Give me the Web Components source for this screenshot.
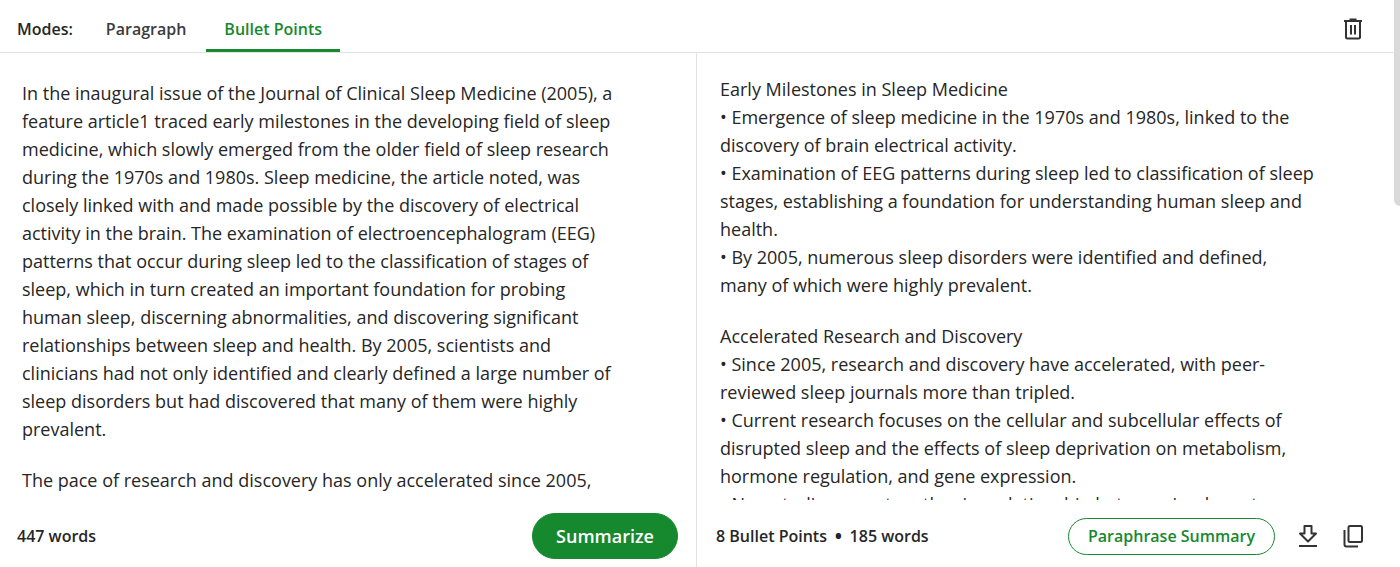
<!DOCTYPE html>
<html lang="en">
<head>
<meta charset="utf-8">
<title>Summarizer</title>
<style>
html,body{height:100%;margin:0}
body{font-family:"Open Sans",sans-serif;color:#262626;background:#fff;overflow:hidden}
</style>
</head>
<body>
<summarizer-app></summarizer-app>
<script>
const define = (name, html) => {
  const t = document.createElement('template');
  t.innerHTML = html;
  customElements.define(name, class extends HTMLElement {
    constructor() {
      super();
      this.attachShadow({ mode: 'open' }).append(t.content.cloneNode(true));
    }
    connectedCallback() {
      const label = this.getAttribute('label');
      const button = this.shadowRoot.querySelector('button');
      if (label && button) button.setAttribute('aria-label', label);
    }
  });
};

define('mode-bar', `
<style>
:host{display:flex;align-items:stretch;height:53px;flex:none;border-bottom:1px solid #e3e3e3;padding:0 35px 0 17px;box-sizing:border-box;font-size:16px;font-weight:600}
.label{align-self:center;margin:6px 15px 0 0}
nav{display:flex;flex:1;gap:2px}
.action{display:flex;padding-top:6px}
</style>
<span class="label">Modes:</span><nav><slot></slot></nav><div class="action"><slot name="action"></slot></div>`);

define('mode-tab', `
<style>
:host{display:flex}
button{font:inherit;color:#3c3c3c;background:none;border:0;border-bottom:3px solid transparent;padding:9px 18px 0;cursor:pointer}
:host([selected]) button{color:#16892f;border-color:#16892f}
</style>
<button type="button"><slot></slot></button>`);

define('icon-button', `
<style>
:host{display:flex;align-items:center}
button{display:flex;border:0;background:none;padding:0;color:#333;cursor:pointer}
</style>
<button type="button"><slot></slot></button>`);

define('pill-button', `
<style>
:host{display:flex}
button{font:inherit;font-weight:600;font-size:16px;height:37px;padding:0 19px;border-radius:24px;border:1px solid #16892f;background:#fff;color:#16892f;cursor:pointer}
:host([primary]) button{font-size:18px;height:46px;padding:0 23px;background:#16892f;color:#fff}
</style>
<button type="button"><slot></slot></button>`);

define('text-pane', `
<style>
:host{display:flex;flex-direction:column;min-width:0;min-height:0}
.body{flex:1;min-height:0;overflow:hidden;font-size:18px;line-height:28px;padding:var(--body-pad)}
footer{flex:none;height:67px;box-sizing:border-box;display:flex;align-items:center;padding:var(--foot-pad);font-size:16px;font-weight:600}
.count{flex:1}
.tools{display:flex;align-items:center;gap:21px}
</style>
<div class="body"><slot></slot></div>
<footer><span class="count"><slot name="count"></slot></span><div class="tools"><slot name="tools"></slot></div></footer>`);

define('summarizer-app', `
<style>
:host{display:flex;flex-direction:column;height:100%;position:relative}
main{flex:1;min-height:0;display:grid;grid-template-columns:697fr 703fr;grid-template-rows:minmax(0,1fr)}
text-pane:first-child{border-right:1px solid #e3e3e3;--body-pad:26px 22px 0;--foot-pad:5px 18px 0 17px}
text-pane:last-child{--body-pad:22px 23px 0;--foot-pad:5px 35px 0 19px}
p{margin:0 0 23px;white-space:pre-line;max-width:596px}
.dot{margin:0 3px;font-size:22px;line-height:16px;vertical-align:-2px}
.thumb{position:absolute;right:0;top:0;width:6px;height:206px;background:#dadada;border-radius:0 0 0 6px}
</style>
<mode-bar>
<mode-tab>Paragraph</mode-tab><mode-tab selected>Bullet Points</mode-tab>
<icon-button slot="action" label="Delete"><svg width="24" height="24" viewBox="0 0 24 24" fill="none" stroke="currentColor" stroke-width="2"><path d="M3 4H21M8.500 2.600H15.500M5 4V20Q5 21.500 6.500 21.500H17.500Q19 21.500 19 20V4M10 8V17.500M14 8V17.500"/></svg></icon-button>
</mode-bar>
<main>
<text-pane><p>In the inaugural issue of the Journal of Clinical Sleep Medicine (2005), a feature article1 traced early milestones in the developing field of sleep medicine, which slowly emerged from the older field of sleep research during the 1970s and 1980s. Sleep medicine, the article noted, was closely linked with and made possible by the discovery of electrical activity in the brain. The examination of electroencephalogram (EEG) patterns that occur during sleep led to the classification of stages of sleep, which in turn created an important foundation for probing human sleep, discerning abnormalities, and discovering significant relationships between sleep and health. By 2005, scientists and clinicians had not only identified and clearly defined a large number of sleep disorders but had discovered that many of them were highly prevalent.</p><p>The pace of research and discovery has only accelerated since 2005,</p>
<span slot="count">447 words</span><pill-button primary slot="tools">Summarize</pill-button></text-pane>
<text-pane><p>Early Milestones in Sleep Medicine
• Emergence of sleep medicine in the 1970s and 1980s, linked to the discovery of brain electrical activity.
• Examination of EEG patterns during sleep led to classification of sleep stages, establishing a foundation for understanding human sleep and health.
• By 2005, numerous sleep disorders were identified and defined, many of which were highly prevalent.</p><p>Accelerated Research and Discovery
• Since 2005, research and discovery have accelerated, with peer-reviewed sleep journals more than tripled.
• Current research focuses on the cellular and subcellular effects of disrupted sleep and the effects of sleep deprivation on metabolism, hormone regulation, and gene expression.
• New studies report on the rise relationship between inadequate</p>
<span slot="count">8 Bullet Points <span class="dot">•</span> 185 words</span><pill-button slot="tools">Paraphrase Summary</pill-button>
<icon-button slot="tools" label="Download"><svg width="24" height="24" viewBox="0 0 24 24" fill="none" stroke="currentColor" stroke-width="2" stroke-linejoin="round"><path d="M8.500 2H15.500V9.500H20L12 17.500L4 9.500H8.500ZM3 22H21"/></svg></icon-button>
<icon-button slot="tools" label="Copy"><svg width="24" height="24" viewBox="0 0 24 24" fill="none" stroke="currentColor" stroke-width="2"><rect x="7.500" y="2" width="13.500" height="16" rx="1.500"/><path d="M3.500 6V20.500Q3.500 22.500 5.500 22.500H17"/></svg></icon-button></text-pane>
</main>
<div class="thumb"></div>`);
</script>
</body>
</html>
